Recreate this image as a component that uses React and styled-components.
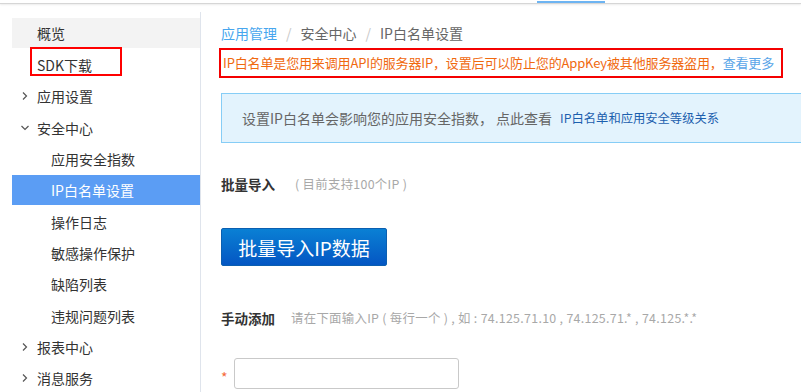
import styled, { createGlobalStyle } from 'styled-components';

const GlobalStyle = createGlobalStyle`
  html, body {
    margin: 0;
    padding: 0;
    background: #fff;
    font-family: "Noto Sans CJK SC", "Noto Sans", sans-serif;
    color: #333;
    overflow: hidden;
  }
`;

const menu = [
  { label: '概览', level: 0, hover: true },
  { label: 'SDK下载', level: 0, marked: true },
  { label: '应用设置', level: 0, arrow: 'right' },
  { label: '安全中心', level: 0, arrow: 'down' },
  { label: '应用安全指数', level: 1 },
  { label: 'IP白名单设置', level: 1, active: true },
  { label: '操作日志', level: 1 },
  { label: '敏感操作保护', level: 1 },
  { label: '缺陷列表', level: 1 },
  { label: '违规问题列表', level: 1 },
  { label: '报表中心', level: 0, arrow: 'right' },
  { label: '消息服务', level: 0, arrow: 'right' },
];

const Chevron = ({ dir }) => (
  <ArrowBox>
    <svg width="10" height="10" viewBox="0 0 10 10">
      {dir === 'down' ? (
        <polyline points="1.5,3 5,6.5 8.5,3" fill="none" stroke="#555" strokeWidth="1.2" />
      ) : (
        <polyline points="3,1.5 6.5,5 3,8.5" fill="none" stroke="#555" strokeWidth="1.2" />
      )}
    </svg>
  </ArrowBox>
);

export default function App() {
  return (
    <>
      <GlobalStyle />
      <TopBar>
        <TabMark />
      </TopBar>
      <Layout>
        <Sidebar>
          {menu.map((item) => (
            <MenuItem
              key={item.label}
              $level={item.level}
              $active={item.active}
              $hover={item.hover}
            >
              {item.arrow && <Chevron dir={item.arrow} />}
              <MenuLabel $marked={item.marked}>{item.label}</MenuLabel>
            </MenuItem>
          ))}
        </Sidebar>
        <Main>
          <Breadcrumb>
            <CrumbLink>应用管理</CrumbLink>
            <Sep>/</Sep>
            <span>安全中心</span>
            <Sep>/</Sep>
            <span>IP白名单设置</span>
          </Breadcrumb>
          <Notice>
            IP白名单是您用来调用API的服务器IP，设置后可以防止您的AppKey被其他服务器盗用，
            <NoticeLink>查看更多</NoticeLink>
          </Notice>
          <InfoBox>
            设置IP白名单会影响您的应用安全指数， 点此查看
            <InfoLink>IP白名单和应用安全等级关系</InfoLink>
          </InfoBox>
          <Section $top={31}>
            <SectionTitle>批量导入</SectionTitle>
            <Hint $gap={20}>( 目前支持100个IP )</Hint>
          </Section>
          <ImportButton>批量导入IP数据</ImportButton>
          <Section $top={42}>
            <SectionTitle>手动添加</SectionTitle>
            <Hint $gap={16}>请在下面输入IP ( 每行一个 ) , 如 : 74.125.71.10 ,  74.125.71.* , 74.125.*.*</Hint>
          </Section>
          <InputRow>
            <Required>*</Required>
            <TextInput />
          </InputRow>
        </Main>
      </Layout>
    </>
  );
}

const TopBar = styled.div`
  height: 3px;
  border-bottom: 1px solid #d6d6d6;
  box-shadow: 0 1px 2px rgba(0, 0, 0, 0.08);
  display: flex;
`;

const TabMark = styled.div`
  margin-left: 537px;
  margin-top: 1px;
  width: 68px;
  height: 2px;
  background: #6db4f2;
`;

const Layout = styled.div`
  display: flex;
  margin-top: 8px;
  height: 380px;
`;

const Sidebar = styled.nav`
  width: 188px;
  padding: 6px 0 0 12px;
  border-right: 1px solid #dfe4ec;
  flex-shrink: 0;
`;

const MenuItem = styled.div`
  position: relative;
  display: flex;
  align-items: center;
  padding-left: ${(p) => (p.$level ? 39 : 25)}px;
  font-size: 14px;
  color: ${(p) => (p.$active ? '#fff' : '#333')};
  background: ${(p) => (p.$active ? '#5b9df4' : p.$hover ? '#f3f3f3' : 'transparent')};
  height: ${(p) => (p.$active || p.$hover ? '30px' : '31.35px')};
  margin-bottom: ${(p) => (p.$active || p.$hover ? '1.35px' : '0')};
`;

const ArrowBox = styled.span`
  position: absolute;
  left: 8px;
  top: 50%;
  margin-top: -5px;
  width: 10px;
  height: 10px;
  display: flex;
`;

const MenuLabel = styled.span`
  position: relative;
  &::after {
    content: '';
    display: ${(p) => (p.$marked ? 'block' : 'none')};
    position: absolute;
    left: -7px;
    top: -8px;
    width: 88px;
    height: 25px;
    border: 2px solid #f00;
  }
`;

const Main = styled.main`
  flex: 1;
  padding-left: 20px;
  min-width: 0;
`;

const Breadcrumb = styled.div`
  margin-top: 11px;
  height: 20px;
  line-height: 20px;
  font-size: 14px;
  color: #666;
`;

const CrumbLink = styled.span`
  color: #47a6ee;
`;

const Sep = styled.span`
  color: #c8c8c8;
  margin: 0 9px;
`;

const Notice = styled.div`
  margin: 5px 0 0 -2px;
  width: 558px;
  height: 26px;
  line-height: 26px;
  border: 2px solid #f40000;
  padding-left: 2px;
  font-size: 13px;
  color: #f0690f;
  white-space: nowrap;
  letter-spacing: -0.15px;
`;

const NoticeLink = styled.span`
  color: #5aa6e8;
`;

const InfoBox = styled.div`
  margin-top: 15px;
  height: 48px;
  display: flex;
  align-items: center;
  padding-left: 20px;
  background: #e3f3fd;
  border: 1px solid #86cdf6;
  border-right: none;
  font-size: 14px;
  color: #666;
  white-space: nowrap;
`;

const InfoLink = styled.span`
  margin-left: 8px;
  font-size: 12.3px;
  color: #1c5fae;
`;

const Section = styled.div`
  margin-top: ${(p) => p.$top}px;
  height: 20px;
  display: flex;
  align-items: center;
  white-space: nowrap;
`;

const SectionTitle = styled.span`
  font-size: 13.5px;
  font-weight: bold;
  color: #333;
`;

const Hint = styled.span`
  margin-left: ${(p) => p.$gap}px;
  font-size: 12.4px;
  letter-spacing: 0.3px;
  color: #a8a8a8;
`;

const ImportButton = styled.button`
  display: block;
  margin-top: 34px;
  width: 166px;
  height: 38px;
  border: 1px solid #0b5fb0;
  border-radius: 2px;
  background: linear-gradient(#0a80d4, #0456c3);
  color: #fff;
  font-family: inherit;
  font-size: 19px;
  padding: 0;
  cursor: pointer;
`;

const InputRow = styled.div`
  margin-top: 30px;
  display: flex;
  align-items: center;
`;

const Required = styled.span`
  width: 13px;
  color: #f56a3a;
  font-size: 14px;
  padding-top: 6px;
`;

const TextInput = styled.input`
  width: 225px;
  height: 31px;
  box-sizing: border-box;
  border: 1px solid #c9c9c9;
  border-radius: 3px;
  outline: none;
`;
